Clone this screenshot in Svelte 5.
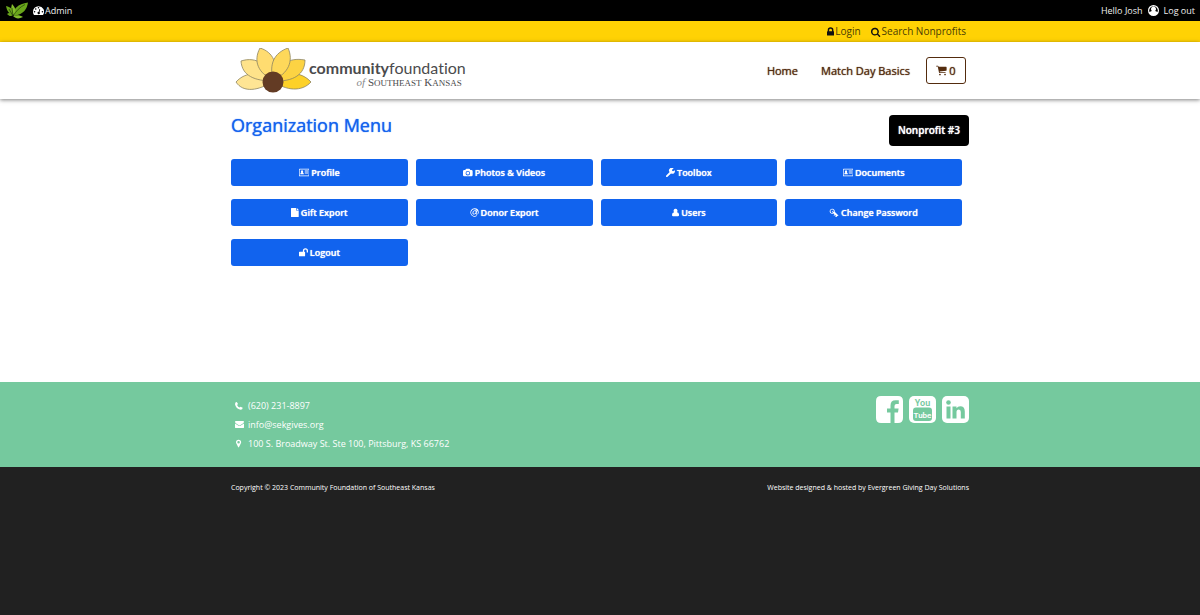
<script lang="ts">
	type Icon = { box: string; path: string };

	// Glyphs share a 14 unit height, the width follows each shape
	const icons: Record<string, Icon> = {
		gauge: {
			box: '0 0 14 14',
			path: 'M7 1.5a7 7 0 0 0-7 7c0 1.5.4 2.800 1.100 3.900.1.2.3.2.5.2h10.800c.2 0 .4 0 .5-.2A7 7 0 0 0 7 1.500zM2 7.500a1 1 0 1 1 0 2 1 1 0 0 1 0-2zM3.500 4a1 1 0 1 1 0 2 1 1 0 0 1 0-2zM7 2.500a1 1 0 1 1 0 2 1 1 0 0 1 0-2zM12 7.500a1 1 0 1 1 0 2 1 1 0 0 1 0-2zM8.300 9.100a1.500 1.500 0 1 1-1-.4l.8-3.200c.2-.6 1.100-.4 1 .2z'
		},
		user: {
			box: '0 0 14 14',
			path: 'M7 0a7 7 0 1 0 0 14A7 7 0 0 0 7 0zM7 1.500a5.500 5.500 0 0 1 5.500 5.500q0 1-.4 2c-1-.9-2-1.300-2.900-1.500a3.200 3.200 0 1 0-4.400 0C3.900 7.700 2.900 8.100 1.900 9q-.4-1-.4-2A5.500 5.500 0 0 1 7 1.500z'
		},
		lock: {
			box: '0 0 10 14',
			path: 'M3 6V4.500a2 2 0 0 1 4 0V6zM1 6h-.2Q0 6 0 6.800v4.400Q0 12 .8 12h8.400q.8 0 .8-.8V6.800Q10 6 9.200 6H9V4.500a4 4 0 0 0-8 0z'
		},
		search: {
			box: '0 0 14 14',
			path: 'M9 6.500a3.500 3.500 0 1 0-7 0 3.500 3.500 0 0 0 7 0zM13 13a1 1 0 0 1-1.700.7L8.600 11A5.500 5.500 0 1 1 10 9.600l2.700 2.700q.3.3.3.7z'
		},
		cart: {
			box: '0 0 14 14',
			path: 'M0 1.500Q0 1 .5 1h2q.5 0 .6.500l.2.700h9.600q.6 0 .6.600v4q0 .5-.5.500L4.700 8.300l.2.900h7q.5 0 .5.500t-.5.500H4.300q-.4 0-.5-.5L2.200 2H.5Q0 2 0 1.500zM5 11a1.100 1.100 0 1 1 0 2.200A1.100 1.100 0 0 1 5 11zM11.500 11a1.100 1.100 0 1 1 0 2.200 1.100 1.100 0 0 1 0-2.200z'
		},
		card: {
			box: '0 0 16 14',
			path: 'M1 1h14q1 0 1 1v10q0 1-1 1H1q-1 0-1-1V2q0-1 1-1zM1 2.500v9.300h14V2.500zM4.700 3.500a1.700 2 0 0 1 1.200 3.400q1.600.3 1.600 3H2q0-2.700 1.500-3a1.700 2 0 0 1 1.200-3.400zM9 4h5v1H9zM9 6h5v1H9zM9 8h5v1H9z'
		},
		camera: {
			box: '0 0 15 14',
			path: 'M2 3h1.700l.4-1q.4-1 1.400-1h4q1 0 1.400 1l.4 1H13q2 0 2 2v6q0 2-2 2H2q-2 0-2-2V5q0-2 2-2zM7.500 4.500a3.500 3.500 0 1 0 0 7 3.500 3.500 0 0 0 0-7zM7.500 5.700a2.300 2.300 0 1 1 0 4.600 2.300 2.300 0 0 1 0-4.600z'
		},
		wrench: {
			box: '0 0 14 14',
			path: 'M7.800 8.400 2.400 13.700a1.400 1.400 0 0 1-2-2l5.300-5.300A4 4 0 0 1 11.800 1L9.500 2.300v1.900L11 5l2.600-1.500A4 4 0 0 1 7.800 8.400z'
		},
		file: {
			box: '0 0 12 14',
			path: 'M8 0v4h4v9.200q0 .8-.8.800H.8Q0 14 0 13.200V.8Q0 0 .8 0zM9 .2q.3.100.5.300l2 2q.2.200.3.500H9z'
		},
		at: {
			box: '0 0 14 14',
			path: 'M7 .5a6.500 6.500 0 1 0 4 11.700l-.7-.9A5.300 5.300 0 1 1 12.300 7c0 1.500-.7 2.300-1.400 2.300-.6 0-.7-.4-.6-1l.8-4.500H9.700l-.1.600C8.200 2.700 3.800 4 3.800 7.800c0 2.700 3.200 3.200 4.800 1.300.5 2 5 1.700 5-2.300A6.500 6.500 0 0 0 7 .5zM7.400 4.800c2.500 0 1.700 4.100-.7 4.100-2.400 0-1.600-4.100.7-4.100z'
		},
		person: {
			box: '0 0 11 14',
			path: 'M5.500 1a3 3.300 0 0 1 2.200 5.600Q11 7 11 11q0 2-1.800 2H1.800Q0 13 0 11q0-4 3.300-4.400A3 3.300 0 0 1 5.500 1z'
		},
		key: {
			box: '0 0 15 14',
			path: 'M5 1a4 4 0 0 1 3.900 5l5.800 5.500-.9 1.300-1-.8-.8.900q.6.800-.2 1.300t-1.300-.3l-.8-1.200.9-1-1-.9-1.600 1.400-.9-1 1.400-1.600L7 8.500A4 4 0 1 1 5 1zM5 2.500a2.500 2.500 0 1 0 1.300 4.600L4.500 5.300l.8-.8 1.900 1.800A2.500 2.500 0 0 0 5 2.500z'
		},
		unlock: {
			box: '0 0 14 14',
			path: 'M6 6V4.500a4 4 0 0 1 8 0v2q0 .5-.5.500h-1q-.5 0-.5-.5v-2a2 2 0 0 0-4 0V6h.7q.8 0 .8.8v5.400q0 .8-.8.800H.8q-.8 0-.8-.8V6.800Q0 6 .8 6z'
		},
		phone: {
			box: '0 0 12 14',
			path: 'M2.800 1.500 4.700 4.700 3.200 6.100q1.500 3 4 4.200L8.700 8.800 12 10.500q0 3-3.300 3Q1.500 12.400 0 5 0 1.500 2.800 1.500z'
		},
		mail: {
			box: '0 0 14 14',
			path: 'M1.300 1.500h11.400Q14 1.500 14 2.700T12.700 5L8 8.100q-1 .7-2 0L1.300 5Q0 4 0 2.800t1.300-1.300zM0 5.400 5.500 9q1.500 1 3 0L14 5.400v5.800q0 1.300-1.300 1.300H1.300Q0 12.500 0 11.200z'
		},
		pin: {
			box: '0 0 8 14',
			path: 'M4 1a4 4 0 0 1 4 4q0 1-.4 1.800L4.700 12.600q-.7 1-1.400 0L.4 6.800Q0 6 0 5a4 4 0 0 1 4-4zM4 3a2 2 0 1 0 0 4 2 2 0 0 0 0-4z'
		}
	};

	const menu = [
		{ icon: 'card', label: 'Profile' },
		{ icon: 'camera', label: 'Photos & Videos' },
		{ icon: 'wrench', label: 'Toolbox' },
		{ icon: 'card', label: 'Documents' },
		{ icon: 'file', label: 'Gift Export' },
		{ icon: 'at', label: 'Donor Export' },
		{ icon: 'person', label: 'Users' },
		{ icon: 'key', label: 'Change Password' },
		{ icon: 'unlock', label: 'Logout' }
	];

	const contacts = [
		{ icon: 'phone', label: '(620) 231-8897', href: 'tel:6202318897' },
		{ icon: 'mail', label: 'info@sekgives.org', href: 'mailto:info@sekgives.org' },
		{ icon: 'pin', label: '100 S. Broadway St. Ste 100, Pittsburg, KS 66762', href: '#map' }
	];
</script>

{#snippet glyph(name: string)}
	<svg class="icon" viewBox={icons[name].box} aria-hidden="true">
		<path d={icons[name].path} fill="currentColor" fill-rule="evenodd" />
	</svg>
{/snippet}

<div class="page">
	<div class="admin-bar">
		<a href="#home" class="leaf" aria-label="Evergreen">
			<svg viewBox="0 0 22 17">
				<g fill="#69a51b">
					<path d="M8 14C6 7 12 2 22 .5 21 7 18 12 8 14z" />
					<path d="M8 13C4 11 5 6 6 2c3 3 5 7 2 11z" fill="#83bd2b" />
					<path d="M7 13C3 12 1 9 0 4c5 1 8 4 7 9z" />
					<path d="M7 13c-2 2-4 1-6-1 2-2 4-1 6 1z" />
					<path d="M7 14c4-1 7-1 10 1-4 2-7 2-10-1z" fill="#83bd2b" />
				</g>
				<path d="M3 7l4 7C10 9 14 5 19 2.500M6 6l1 8" fill="none" stroke="#243d0b" stroke-width=".7" />
			</svg>
		</a>
		<a href="#admin" class="admin">{@render glyph('gauge')}Admin</a>
		<div class="session">
			<span>Hello Josh</span>
			{@render glyph('user')}
			<a href="#logout">Log out</a>
		</div>
	</div>

	<div class="utility">
		<div class="container">
			<a href="#login">{@render glyph('lock')}Login</a>
			<a href="#search">{@render glyph('search')}Search Nonprofits</a>
		</div>
	</div>

	<header>
		<div class="container">
			<a href="#home" class="logo">
				<svg class="flower" viewBox="0 2 78 46" aria-hidden="true">
					<g stroke="#8d8460" stroke-width=".8">
						<path d="M38 35C24 45 8 47 1 36c10-11 24-10 37-1z" fill="#ffe594" />
						<path d="M38 35C20 35 7 30 6 15c16-5 27 4 32 20z" fill="#ffe38a" />
						<path d="M76 36C67 46 51 45 38 35c12-10 28-10 38 1z" fill="#fdd128" />
						<path d="M38 35c4-16 15-24 32-21 0 14-11 22-32 21z" fill="#fcd343" />
						<path d="M38 34C23 27 18 15 25 2c13 4 19 16 13 32z" fill="#ffdc70" />
						<path d="M38 34C34 18 39 7 53 2c6 13 0 26-15 32z" fill="#fed85a" />
					</g>
					<circle cx="38" cy="36" r="10.500" fill="#633b24" />
				</svg>
				<span class="wordmark">
					<span class="name"><b>community</b>foundation</span>
					<span class="region"><i>of</i> S<small>OUTHEAST</small> K<small>ANSAS</small></span>
				</span>
			</a>
			<nav>
				<a href="#home">Home</a>
				<a href="#basics">Match Day Basics</a>
				<a href="#cart" class="cart">{@render glyph('cart')}0</a>
			</nav>
		</div>
	</header>

	<main class="container">
		<div class="title-row">
			<h1>Organization Menu</h1>
			<span class="badge">Nonprofit #3</span>
		</div>
		<div class="menu">
			{#each menu as item}
				<button type="button">{@render glyph(item.icon)}{item.label}</button>
			{/each}
		</div>
	</main>

	<section class="contact">
		<div class="container">
			<ul>
				{#each contacts as item}
					<li><span class="mark">{@render glyph(item.icon)}</span><a href={item.href}>{item.label}</a></li>
				{/each}
			</ul>
			<div class="social">
				<a href="#facebook" aria-label="Facebook">
					<svg viewBox="0 0 27 27">
						<path
							fill="#fff"
							d="M5 0h17q5 0 5 5v17q0 5-5 5h-3.500V16.500H22l.6-4h-4.100V10q0-2 2-2h2.300V4.300h-3.300q-5 0-5 5.200v3H11v4h3.500V27H5q-5 0-5-5V5q0-5 5-5z"
						/>
					</svg>
				</a>
				<a href="#youtube" aria-label="YouTube">
					<svg viewBox="0 0 27 27">
						<rect width="27" height="27" rx="5" fill="#fff" />
						<rect x="4" y="11.500" width="19" height="13.500" rx="3" fill="#75c99e" />
						<text x="13.500" y="9.500" font-size="9" fill="#75c99e">You</text>
						<text x="13.500" y="21.500" font-size="8" fill="#fff">Tube</text>
					</svg>
				</a>
				<a href="#linkedin" aria-label="LinkedIn">
					<svg viewBox="0 0 27 27">
						<rect width="27" height="27" rx="5" fill="#fff" />
						<g fill="#75c99e">
							<circle cx="6.500" cy="6.500" r="2.300" />
							<rect x="4.500" y="10.500" width="4" height="12" />
							<path d="M10.500 10.500h4v1.700q1.300-2 3.700-2 4.600 0 4.600 5.300v7h-4v-6.600q0-2.500-2-2.500-2.300 0-2.300 2.700v6.400h-4z" />
						</g>
					</svg>
				</a>
			</div>
		</div>
	</section>

	<footer>
		<div class="container">
			<span>Copyright © 2023 Community Foundation of Southeast Kansas</span>
			<span>Website designed &amp; hosted by <a href="#evergreen">Evergreen Giving Day Solutions</a></span>
		</div>
	</footer>
</div>

<style>
	:global(body) {
		background: #fff;
	}

	.page {
		display: flex;
		flex-direction: column;
		min-height: 100vh;
		font-family: 'Open Sans', sans-serif;
		font-size: 9px;
	}

	.page * {
		box-sizing: border-box;
	}

	a {
		color: inherit;
		text-decoration: none;
	}

	.container {
		width: 100%;
		max-width: 738px;
		margin: 0 auto;
	}

	.icon {
		height: 1em;
		flex: none;
	}

	/* Top bars */
	.admin-bar {
		display: flex;
		align-items: center;
		height: 21px;
		padding: 0 5px 0 6px;
		background: #000;
		color: #eee;
	}

	.leaf svg {
		display: block;
		width: 22px;
		height: 17px;
	}

	.admin {
		display: flex;
		align-items: center;
		gap: 1px;
		margin-left: 5px;
	}

	.admin .icon,
	.session .icon {
		height: 11px;
		color: #fff;
	}

	.session {
		display: flex;
		align-items: center;
		gap: 5px;
		margin-left: auto;
	}

	.utility {
		background: #ffd204;
		color: #4a3c05;
		font-size: 10px;
	}

	.utility .container {
		display: flex;
		justify-content: flex-end;
		gap: 10px;
		padding-right: 3px;
		line-height: 21px;
	}

	.utility a {
		display: flex;
		align-items: center;
		gap: 1px;
	}

	.utility .icon {
		color: #111;
	}

	/* Header */
	header {
		position: relative;
		background: #fff;
		box-shadow: 0 1px 4px rgba(0, 0, 0, 0.5);
	}

	header .container {
		display: flex;
		align-items: center;
		justify-content: space-between;
		height: 57px;
		padding: 0 3px 0 4px;
	}

	.logo {
		display: flex;
		align-items: center;
	}

	.flower {
		width: 78px;
		height: 46px;
	}

	.wordmark {
		display: flex;
		flex-direction: column;
		margin-left: -4px;
		padding-top: 9px;
		color: #4b4b4d;
	}

	.name {
		font-family: Lato, sans-serif;
		font-size: 16px;
		font-variant-ligatures: none;
		line-height: 16px;
	}

	.region {
		align-self: flex-end;
		padding-right: 4px;
		font-family: 'Liberation Serif', serif;
		font-size: 11px;
		line-height: 13px;
	}

	.region i {
		font-size: 11px;
		color: #888;
	}

	.region small {
		font-size: 9px;
	}

	nav {
		display: flex;
		align-items: center;
		gap: 23px;
		color: #542c0e;
		font-size: 11px;
		text-shadow: 0 0 1px currentColor;
	}

	.cart {
		display: flex;
		align-items: center;
		justify-content: center;
		gap: 2px;
		width: 40px;
		height: 27px;
		margin-left: -7px;
		border: 1px solid #542c0e;
		border-radius: 3px;
	}

	/* Menu */
	main {
		padding: 16px 0 116px;
	}

	.title-row {
		display: flex;
		align-items: flex-start;
		justify-content: space-between;
	}

	h1 {
		margin: 0;
		color: #1463ee;
		font-size: 18px;
		font-weight: 400;
		line-height: 20px;
		text-shadow: 0 0 1px currentColor;
	}

	.badge {
		padding: 0 9px;
		border-radius: 4px;
		background: #000;
		color: #fff;
		font-size: 10px;
		font-weight: 600;
		line-height: 31px;
		text-shadow: 0 0 1px currentColor;
	}

	.menu {
		display: grid;
		grid-template-columns: repeat(4, 1fr);
		gap: 13px 8px;
		margin: 13px 7px 0 0;
	}

	button {
		display: flex;
		align-items: center;
		justify-content: center;
		gap: 2px;
		height: 27px;
		padding: 0;
		border: 0;
		border-radius: 3px;
		background: #1163ee;
		color: #fff;
		font: inherit;
		font-weight: 600;
		text-shadow: 0 0 1px currentColor;
		cursor: pointer;
	}

	/* Contact */
	.contact {
		background: #75c99e;
		color: #fff;
	}

	.contact .container {
		display: flex;
		justify-content: space-between;
		padding: 14px 0;
	}

	ul {
		margin: 0;
		padding: 0 0 0 3px;
		list-style: none;
	}

	li {
		display: flex;
		align-items: center;
		gap: 4px;
		line-height: 19px;
	}

	.mark {
		display: flex;
		justify-content: center;
		width: 10px;
	}

	.social {
		display: flex;
		gap: 6px;
	}

	.social svg {
		display: block;
		width: 27px;
		height: 27px;
	}

	.social text {
		font-family: Roboto, sans-serif;
		font-weight: 600;
		text-anchor: middle;
	}

	footer {
		flex: 1;
		background: #212121;
		color: #fff;
		font-size: 7px;
	}

	footer .container {
		display: flex;
		justify-content: space-between;
		padding-top: 16px;
		line-height: 10px;
	}
</style>
